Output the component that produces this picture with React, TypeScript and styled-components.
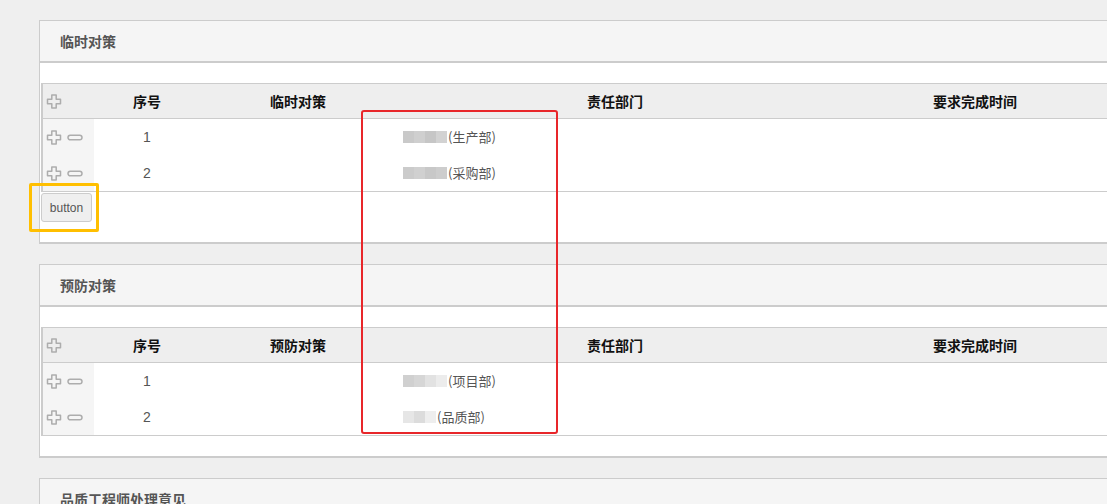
import React from 'react'
import styled, { createGlobalStyle } from 'styled-components'

const GlobalStyle = createGlobalStyle`
  html, body {
    margin: 0;
    padding: 0;
    background: #efefef;
    overflow: hidden;
  }
  body {
    font-family: "Liberation Sans", Arial, "Noto Sans CJK SC", sans-serif;
    color: #555;
  }
`

type Row = { no: number; shades: string[]; dept: string }
type Section = { title: string; column: string; rows: Row[]; withButton?: boolean }

const sections: Section[] = [
  {
    title: '临时对策',
    column: '临时对策',
    withButton: true,
    rows: [
      { no: 1, shades: ['#c9c9c9', '#cfcfcf', '#c6c6c6', '#d2d2d2'], dept: '(生产部)' },
      { no: 2, shades: ['#cbcbcb', '#d0d0d0', '#c8c8c8', '#cdcdcd'], dept: '(采购部)' },
    ],
  },
  {
    title: '预防对策',
    column: '预防对策',
    rows: [
      { no: 1, shades: ['#d0d0d0', '#d6d6d6', '#e2e2e2', '#ececec'], dept: '(项目部)' },
      { no: 2, shades: ['#e6e6e6', '#dcdcdc', '#eeeeee'], dept: '(品质部)' },
    ],
  },
]

const PlusIcon: React.FC = () => (
  <svg width="16" height="15" viewBox="0 0 16 15">
    <path
      d="M5.8 1h4.4v4.3h4.3v4.4h-4.3V14H5.8V9.7H1.5V5.3h4.3z"
      fill="none"
      stroke="#adadad"
      strokeWidth="1.5"
      strokeLinejoin="round"
    />
  </svg>
)

const MinusIcon: React.FC = () => (
  <svg width="16" height="15" viewBox="0 0 16 15">
    <rect x="1" y="5.2" width="14" height="4.6" rx="2.3" fill="none" stroke="#adadad" strokeWidth="1.5" />
  </svg>
)

const App: React.FC = () => (
  <Page>
    <GlobalStyle />
    {sections.map((s) => (
      <Panel key={s.title}>
        <PanelHeader>{s.title}</PanelHeader>
        <PanelBody>
          <Table>
            <HeadRow>
              <CtrlCell>
                <PlusIcon />
              </CtrlCell>
              <HeadCell>序号</HeadCell>
              <HeadCell>{s.column}</HeadCell>
              <HeadCell>责任部门</HeadCell>
              <HeadCell>要求完成时间</HeadCell>
              <HeadCell />
            </HeadRow>
            {s.rows.map((r) => (
              <DataRow key={r.no}>
                <CtrlCell $shaded>
                  <PlusIcon />
                  <MinusIcon />
                </CtrlCell>
                <NumCell>{r.no}</NumCell>
                <Cell />
                <DeptCell>
                  <Mosaic>
                    {r.shades.map((c, i) => (
                      <Tile key={i} $color={c} />
                    ))}
                  </Mosaic>
                  {r.dept}
                </DeptCell>
              </DataRow>
            ))}
          </Table>
          {s.withButton && (
            <ButtonRow>
              <Button>button</Button>
            </ButtonRow>
          )}
        </PanelBody>
      </Panel>
    ))}
    <Panel>
      <PanelHeader>品质工程师处理意见</PanelHeader>
    </Panel>
    <RedMark />
    <YellowMark />
  </Page>
)
export default App

const Page = styled.div`
  position: relative;
  padding: 20px 0 0 39px;
  height: 504px;
  box-sizing: border-box;
  display: flex;
  flex-direction: column;
  gap: 20px;
`
const Panel = styled.div`
  width: 1100px;
  flex-shrink: 0;
  background: #fff;
  border: 1px solid #ccc;
  border-bottom-width: 2px;
`
const PanelHeader = styled.div`
  height: 40px;
  display: flex;
  align-items: center;
  padding-left: 20px;
  background: #f5f5f5;
  border-bottom: 2px solid #ccc;
  font-family: "Noto Sans CJK SC", sans-serif;
  font-size: 14px;
  font-weight: 700;
  color: #555;
`
const PanelBody = styled.div`
  padding: 20px 0 20px 1px;
`
const Table = styled.div`
  border-left: 2px solid #ccc;
  border-top: 1px solid #ccc;
  border-bottom: 1px solid #ccc;
`
const HeadRow = styled.div`
  display: grid;
  grid-template-columns: 51px 106px 196px 438px 282px 1fr;
  height: 34px;
  background: #eeeeee;
  border-bottom: 1px solid #ccc;
`
const DataRow = styled.div`
  display: grid;
  grid-template-columns: 51px 106px 196px 1fr;
  height: 36px;
`
const CtrlCell = styled.div<{ $shaded?: boolean }>`
  display: flex;
  align-items: center;
  gap: 5px;
  padding-left: 3px;
  background: ${(p) => (p.$shaded ? '#f5f5f5' : 'transparent')};
`
const HeadCell = styled.div`
  display: flex;
  align-items: center;
  justify-content: center;
  font-family: "Noto Sans CJK SC", sans-serif;
  font-size: 14px;
  font-weight: 700;
  color: #111;
`
const Cell = styled.div``
const NumCell = styled.div`
  display: flex;
  align-items: center;
  justify-content: center;
  font-size: 14px;
  color: #555;
`
const DeptCell = styled.div`
  display: flex;
  align-items: center;
  padding-left: 7px;
  padding-bottom: 1px;
  font-family: "Noto Sans CJK SC", sans-serif;
  font-size: 13px;
  color: #555;
`
const Mosaic = styled.span`
  display: inline-flex;
  height: 12px;
  margin-right: 1px;
  filter: blur(0.6px);
`
const Tile = styled.span<{ $color: string }>`
  width: 11px;
  height: 12px;
  background: ${(p) => p.$color};
`
const ButtonRow = styled.div`
  height: 29px;
  padding-top: 1px;
`
const Button = styled.button`
  width: 51px;
  height: 29px;
  padding: 0;
  background: #efefef;
  border: 1px solid #ccc;
  border-radius: 3px;
  font-family: "Liberation Sans", Arial, sans-serif;
  font-size: 12px;
  color: #555;
`
const RedMark = styled.div`
  position: absolute;
  left: 361px;
  top: 110px;
  width: 193px;
  height: 320px;
  border: 2px solid #e8262a;
  border-radius: 3px;
  pointer-events: none;
`
const YellowMark = styled.div`
  position: absolute;
  left: 29px;
  top: 183px;
  width: 64px;
  height: 43px;
  border: 3px solid #ffbf00;
  border-radius: 2px;
  pointer-events: none;
`
